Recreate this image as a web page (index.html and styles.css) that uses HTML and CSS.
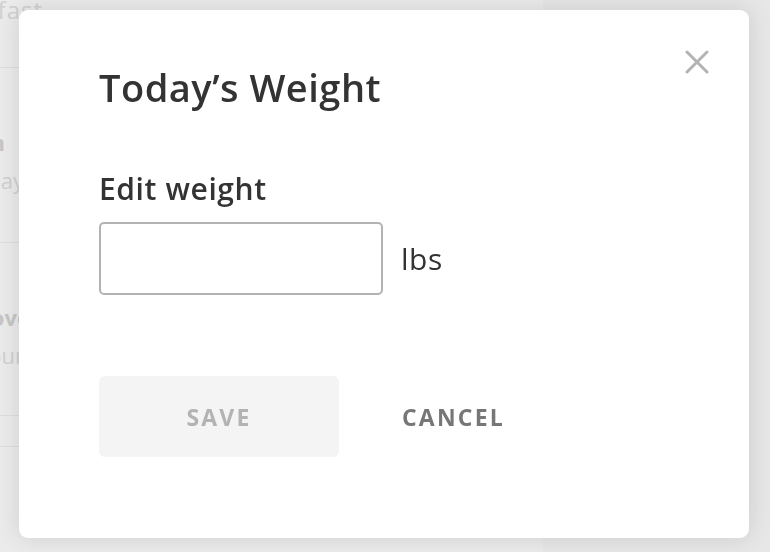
FILE: index.html
```html
<!DOCTYPE html>
<html lang="en">
<head>
    <meta charset="UTF-8">
    <meta name="viewport" content="width=device-width, initial-scale=1.0">
    <title>Today's Weight</title>
    <link rel="stylesheet" href="styles.css">
</head>
<body>
    <div class="page">
        <div class="feed">
            <div class="feed-item first">
                <div class="feed-title light end-43">Breakfast</div>
            </div>
            <div class="feed-item">
                <div class="feed-title end-5">Afternoon</div>
                <div class="feed-sub end-24">Display</div>
            </div>
            <div class="feed-item third">
                <div class="feed-title end-30">Improve</div>
                <div class="feed-sub end-24">Your</div>
            </div>
            <div class="feed-item short"></div>
        </div>
        <div class="side"></div>
    </div>

    <div class="overlay">
        <div class="modal">
            <button class="close" aria-label="Close">
                <svg width="24" height="24" viewBox="0 0 24 24">
                    <path d="M2 2 L22 22 M22 2 L2 22" stroke="#b3b3b3" stroke-width="3" stroke-linecap="round" fill="none"/>
                </svg>
            </button>
            <h1 class="modal-title">Today’s Weight</h1>
            <form id="weightForm">
                <label for="weight" class="field-label">Edit weight</label>
                <div class="field-row">
                    <input type="text" id="weight" class="field-input" />
                    <span class="unit">lbs</span>
                </div>
                <div class="actions">
                    <button type="submit" class="btn-save" disabled>Save</button>
                    <button type="button" class="btn-cancel">Cancel</button>
                </div>
            </form>
        </div>
    </div>
</body>
</html>
```

FILE: styles.css
```css
body {
    margin: 0;
    height: 552px;
    overflow: hidden;
    background-color: #e6e6e6;
    font-family: "Open Sans", Arial, sans-serif;
}

.page {
    display: flex;
    height: 552px;
}

.feed {
    width: 543px;
    background-color: #ebebeb;
    display: flex;
    flex-direction: column;
}

.feed-item {
    height: 175px;
    padding-top: 61px;
    border-bottom: 1px solid #dedede;
    box-sizing: border-box;
}

    .feed-item.first {
        height: 68px;
        padding-top: 0;
    }

    .feed-item.third {
        height: 173px;
    }

    .feed-item.short {
        height: 31px;
        padding-top: 0;
    }

/* текст фона обрезан слева краем окна, поэтому выравниваем по правому краю */
.feed-title,
.feed-sub {
    width: 300px;
    text-align: right;
    white-space: nowrap;
    font-size: 22px;
    line-height: 26px;
}

.feed-title {
    font-weight: 700;
    color: #c6c6c6;
}

    .feed-title.light {
        font-weight: 400;
        font-size: 24px;
        letter-spacing: 1px;
        color: #d0d0d0;
        margin-top: -3px;
    }

.feed-sub {
    color: #d0d0d0;
    margin-top: 12px;
}

.end-5 { margin-left: -295px; }
.end-24 { margin-left: -276px; }
.end-30 { margin-left: -270px; }
.end-43 { margin-left: -257px; }

.side {
    flex: 1;
    background-color: #e7e7e7;
}

.overlay {
    position: fixed;
    inset: 0;
}

.modal {
    position: absolute;
    left: 19px;
    top: 10px;
    width: 730px;
    height: 528px;
    background: #fff;
    border-radius: 9px;
    box-shadow: 0 0 24px rgba(0, 0, 0, 0.12);
    padding: 54px 80px 0;
    box-sizing: border-box;
    color: #333;
}

.close {
    position: absolute;
    top: 40px;
    right: 40px;
    width: 24px;
    height: 24px;
    padding: 0;
    border: none;
    background: none;
    cursor: pointer;
}

    .close svg {
        display: block;
    }

.modal-title {
    margin: 0;
    font-size: 38px;
    font-weight: 600;
    line-height: 46px;
    letter-spacing: 0.5px;
}

.field-label {
    display: block;
    margin-top: 59px;
    font-size: 30px;
    font-weight: 600;
    line-height: 40px;
    letter-spacing: 0.6px;
}

.field-row {
    display: flex;
    align-items: center;
    gap: 18px;
    margin-top: 13px;
}

.field-input {
    width: 284px;
    height: 73px;
    border: 2px solid #b3b3b3;
    border-radius: 5px;
    box-sizing: border-box;
    font-size: 24px;
    padding: 0 12px;
    font-family: inherit;
}

.unit {
    font-size: 30px;
    color: #333;
    letter-spacing: 0.5px;
}

.actions {
    display: flex;
    align-items: center;
    gap: 63px;
    margin-top: 81px;
}

.btn-save {
    width: 240px;
    height: 81px;
    background-color: #f4f4f4;
    border: none;
    border-radius: 6px;
    color: #b3b3b3;
    font-family: inherit;
    font-size: 23px;
    font-weight: 700;
    letter-spacing: 2.2px;
    text-transform: uppercase;
}

.btn-cancel {
    padding: 0;
    border: none;
    background: none;
    color: #777;
    font-family: inherit;
    font-size: 23px;
    font-weight: 700;
    letter-spacing: 2.2px;
    text-transform: uppercase;
    cursor: pointer;
}
```
